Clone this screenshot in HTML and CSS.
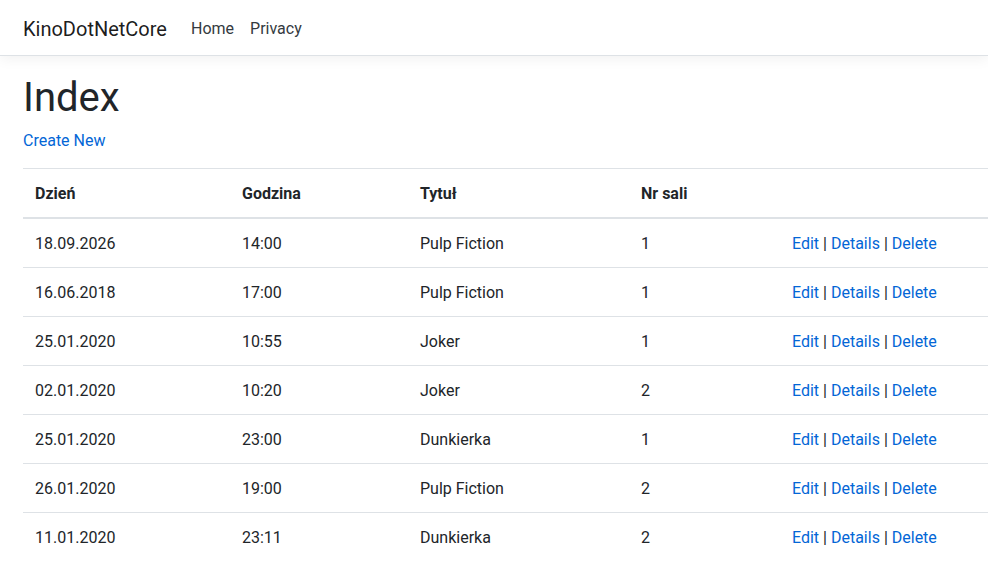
FILE: index.html
```html
<!DOCTYPE html>
<html lang="pl">
<head>
<meta charset="utf-8">
<title>Index - KinoDotNetCore</title>
<link rel="stylesheet" href="styles.css">
</head>
<body>
<header class="navbar">
  <a class="brand" href="#">KinoDotNetCore</a>
  <nav class="nav">
    <a class="nav-link" href="#">Home</a>
    <a class="nav-link" href="#">Privacy</a>
  </nav>
</header>
<main class="container">
  <h1>Index</h1>
  <p class="create"><a href="#">Create New</a></p>
  <table class="table">
    <colgroup>
      <col class="c1"><col class="c2"><col class="c3"><col class="c4"><col class="c5">
    </colgroup>
    <thead>
      <tr><th>Dzień</th><th>Godzina</th><th>Tytuł</th><th>Nr sali</th><th></th></tr>
    </thead>
    <tbody>
      <tr><td>18.09.2026</td><td>14:00</td><td>Pulp Fiction</td><td>1</td><td><a href="#">Edit</a> | <a href="#">Details</a> | <a href="#">Delete</a></td></tr>
      <tr><td>16.06.2018</td><td>17:00</td><td>Pulp Fiction</td><td>1</td><td><a href="#">Edit</a> | <a href="#">Details</a> | <a href="#">Delete</a></td></tr>
      <tr><td>25.01.2020</td><td>10:55</td><td>Joker</td><td>1</td><td><a href="#">Edit</a> | <a href="#">Details</a> | <a href="#">Delete</a></td></tr>
      <tr><td>02.01.2020</td><td>10:20</td><td>Joker</td><td>2</td><td><a href="#">Edit</a> | <a href="#">Details</a> | <a href="#">Delete</a></td></tr>
      <tr><td>25.01.2020</td><td>23:00</td><td>Dunkierka</td><td>1</td><td><a href="#">Edit</a> | <a href="#">Details</a> | <a href="#">Delete</a></td></tr>
      <tr><td>26.01.2020</td><td>19:00</td><td>Pulp Fiction</td><td>2</td><td><a href="#">Edit</a> | <a href="#">Details</a> | <a href="#">Delete</a></td></tr>
      <tr><td>11.01.2020</td><td>23:11</td><td>Dunkierka</td><td>2</td><td><a href="#">Edit</a> | <a href="#">Details</a> | <a href="#">Delete</a></td></tr>
    </tbody>
  </table>
</main>
</body>
</html>
```

FILE: styles.css
```css
* { box-sizing: border-box; }
html, body { margin: 0; }
body {
  font-family: "Segoe UI", Roboto, "Liberation Sans", sans-serif;
  font-size: 16px;
  line-height: 1.5;
  color: #212529;
  background: #fff;
  overflow: hidden;
}
a { color: #0366d6; text-decoration: none; }

.navbar {
  display: flex;
  align-items: center;
  padding: 8px 23px;
  height: 56px;
  border-bottom: 1px solid #dee2e6;
  box-shadow: 0 4px 12px rgba(0,0,0,.05);
  background: #fff;
  margin-bottom: 16px;
}
.brand {
  font-size: 20px;
  line-height: 30px;
  padding: 6px 0 4px;
  margin-right: 16px;
  color: rgba(0,0,0,.9);
}
.nav { display: flex; }
.nav-link {
  padding: 9px 8px 7px;
  color: #343a40;
}

.container {
  padding: 0 0 0 23px;
  width: 988px;
}
h1 {
  font-size: 40px;
  font-weight: 400;
  line-height: 1.2;
  margin: 0 0 8px;
  padding-top: 2px;
  height: 48px;
}
.create { margin: 0 0 16px; padding-top: 1px; height: 24px; }

.table {
  width: 100%;
  border-collapse: collapse;
  table-layout: fixed;
}
.c1 { width: 207px; }
.c2 { width: 178px; }
.c3 { width: 221px; }
.c4 { width: 151px; }
.table th, .table td {
  padding: 13px 12px 11px;
  border-top: 1px solid #dee2e6;
  text-align: left;
  vertical-align: top;
}
.table th { font-weight: 700; }
.table thead th { border-bottom: 2px solid #dee2e6; }
```
